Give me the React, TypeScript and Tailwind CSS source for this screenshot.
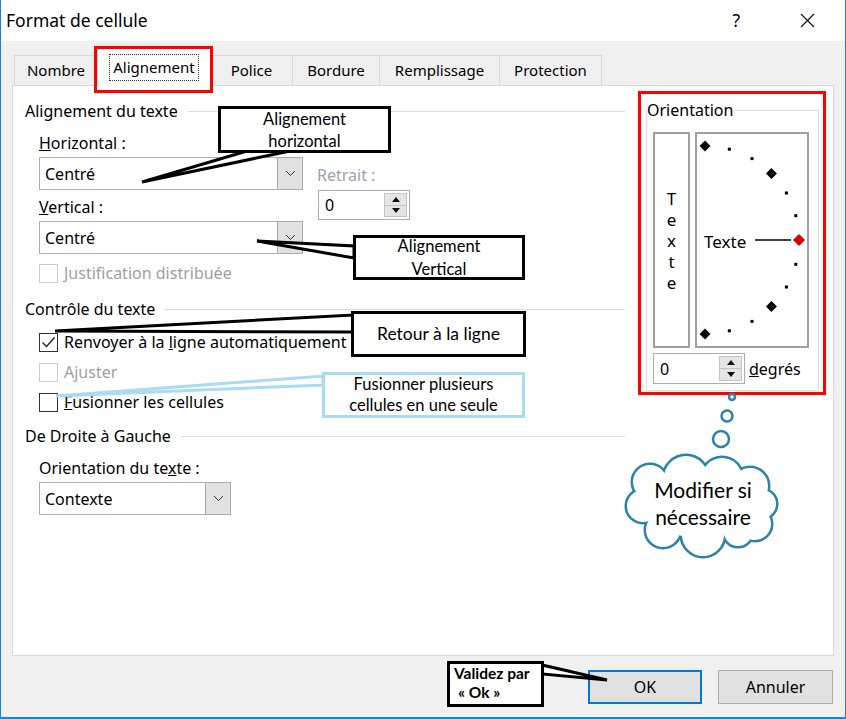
import React from "react";

const ui = "font-['Noto_Sans',sans-serif]";
const note = "font-['Lato',sans-serif]";

function Chevron() {
  return (
    <svg width="11" height="7" viewBox="0 0 11 7">
      <path d="M1 1l4.5 4.5L10 1" fill="none" stroke="#333" strokeWidth="1" />
    </svg>
  );
}

function Select({ value, width }: { value: string; width: string }) {
  return (
    <div className={`${width} h-[33px] flex border border-[#adadad] bg-white`}>
      <div className="flex-1 flex items-center pl-[5px]">{value}</div>
      <div className="w-[25px] flex items-center justify-center bg-[#e1e1e1] border-l border-[#adadad]">
        <Chevron />
      </div>
    </div>
  );
}

function Spin({ value, width, height }: { value: string; width: string; height: string }) {
  return (
    <div className={`${width} ${height} flex border border-[#adadad] bg-white`}>
      <div className="flex-1 flex items-center pl-[6px]">{value}</div>
      <div className="w-[25px] flex flex-col py-[2px] pr-[2px]">
        <div className="flex-1 bg-[#e5e5e5] border border-[#c4c4c4] flex items-center justify-center">
          <svg width="8" height="5" viewBox="0 0 8 5">
            <path d="M0 5L4 0L8 5Z" fill="#111" />
          </svg>
        </div>
        <div className="flex-1 bg-[#e5e5e5] border border-t-0 border-[#c4c4c4] flex items-center justify-center">
          <svg width="8" height="5" viewBox="0 0 8 5">
            <path d="M0 0L8 0L4 5Z" fill="#111" />
          </svg>
        </div>
      </div>
    </div>
  );
}

function Check({
  label,
  checked = false,
  disabled = false,
}: {
  label: React.ReactNode;
  checked?: boolean;
  disabled?: boolean;
}) {
  return (
    <div className={`h-[30px] flex items-center gap-[6px] ${disabled ? "text-[#a0a0a0]" : ""}`}>
      <div
        className={`w-[19px] h-[19px] border bg-white flex items-center justify-center ${
          disabled ? "border-[#cccccc]" : "border-[#333333]"
        }`}
      >
        {checked && (
          <svg width="17" height="17" viewBox="0 0 17 17">
            <path d="M2.5 8.5L6.5 12.5L14.5 3.5" fill="none" stroke="#222" strokeWidth="1.4" />
          </svg>
        )}
      </div>
      <span>{label}</span>
    </div>
  );
}

function GroupTitle({ children }: { children: React.ReactNode }) {
  return (
    <div className="h-[22px] flex items-center gap-[10px]">
      <span>{children}</span>
      <div className="flex-1 h-px bg-[#dcdcdc]" />
    </div>
  );
}

function Tab({ label, width }: { label: string; width: string }) {
  return (
    <div
      className={`${width} h-[30px] flex items-center justify-center border border-b-0 border-[#d9d9d9] bg-[#f0f0f0] -ml-px first:ml-0`}
    >
      {label}
    </div>
  );
}

function Semicircle() {
  const marks = Array.from({ length: 13 }, (_, i) => {
    const a = ((90 - i * 15) * Math.PI) / 180;
    return { x: 8 + 94 * Math.cos(a), y: 106 - 94 * Math.sin(a), big: i % 3 === 0, red: i === 6 };
  });
  return (
    <svg width="110" height="212" viewBox="0 0 110 212">
      {marks.map((m, i) =>
        m.big ? (
          <path
            key={i}
            d={`M${m.x} ${m.y - 5.5}L${m.x + 5.5} ${m.y}L${m.x} ${m.y + 5.5}L${m.x - 5.5} ${m.y}Z`}
            fill={m.red ? "#e00000" : "#000"}
            stroke={m.red ? "#700" : "none"}
            strokeWidth="0.8"
          />
        ) : (
          <rect key={i} x={m.x - 1.5} y={m.y - 1.5} width="3" height="3" fill="#000" />
        )
      )}
      <line x1="58" y1="106" x2="94" y2="106" stroke="#000" strokeWidth="1.5" />
      <text x="7" y="114" fontSize="17" fontFamily="Noto Sans, sans-serif" fill="#000">
        Texte
      </text>
    </svg>
  );
}

export default function App() {
  return (
    <div
      className={`${ui} relative w-[846px] h-[719px] overflow-hidden bg-[#f0f0f0] border-l border-r border-b-2 border-[#1883d7] text-[16px] text-black flex flex-col`}
    >
      {/* Title bar */}
      <div className="h-[41px] shrink-0 bg-white flex items-center pl-[5px] pr-[30px] text-[17.5px]">
        <span>Format de cellule</span>
        <span className="ml-auto mr-[60px]">?</span>
        <svg width="15" height="15" viewBox="0 0 15 15">
          <path d="M1 1L14 14M14 1L1 14" stroke="#111" strokeWidth="1.2" />
        </svg>
      </div>

      {/* Tabs */}
      <div className="h-[44px] shrink-0 pl-[13px] flex items-end text-[15px]">
        <Tab label="Nombre" width="w-[84px]" />
        <div className="w-[114px] h-[38px] -ml-px -mb-px relative z-10 bg-white border border-b-0 border-[#d9d9d9] flex items-center justify-center">
          <span className="px-[3px] py-px border border-dotted border-[#333]">Alignement</span>
        </div>
        <Tab label="Police" width="w-[83px]" />
        <Tab label="Bordure" width="w-[88px]" />
        <Tab label="Remplissage" width="w-[121px]" />
        <Tab label="Protection" width="w-[103px]" />
      </div>

      {/* Panel */}
      <div className="mx-[11px] h-[571px] shrink-0 bg-white border border-[#d9d9d9] flex">
        {/* Left column */}
        <div className="w-[600px] ml-[12px] flex flex-col">
          <div className="mt-[14px]">
            <GroupTitle>Alignement du texte</GroupTitle>
          </div>
          <div className="flex pl-[14px] gap-[14px] mt-[10px]">
            <div className="w-[264px] flex flex-col">
              <div className="h-[22px] flex items-center">
                <span>
                  <span className="underline">H</span>orizontal :
                </span>
              </div>
              <div className="mt-[3px]">
                <Select value="Centré" width="w-[264px]" />
              </div>
              <div className="h-[22px] mt-[6px] flex items-center">
                <span>
                  <span className="underline">V</span>ertical :
                </span>
              </div>
              <div className="mt-[3px]">
                <Select value="Centré" width="w-[264px]" />
              </div>
              <div className="mt-[4px]">
                <Check disabled label="Justification distribuée" />
              </div>
            </div>
            <div className="flex flex-col pt-[32px]">
              <div className="h-[22px] flex items-center text-[#9aa3ad]">Retrait :</div>
              <div className="mt-[4px] ml-px">
                <Spin value="0" width="w-[92px]" height="h-[30px]" />
              </div>
            </div>
          </div>

          <div className="mt-[10px]">
            <GroupTitle>Contrôle du texte</GroupTitle>
          </div>
          <div className="pl-[14px] mt-[7px] flex flex-col">
            <Check
              checked
              label={
                <>
                  Renvoyer à la <span className="underline">l</span>igne automatiquement
                </>
              }
            />
            <Check disabled label="Ajuster" />
            <Check
              label={
                <>
                  <span className="underline">F</span>usionner les cellules
                </>
              }
            />
          </div>

          <div className="mt-[8px]">
            <GroupTitle>De Droite à Gauche</GroupTitle>
          </div>
          <div className="pl-[14px] mt-[10px] flex flex-col">
            <div className="h-[22px] flex items-center">
              <span>
                Orientation du te<span className="underline">x</span>te :
              </span>
            </div>
            <div className="mt-[3px]">
              <Select value="Contexte" width="w-[192px]" />
            </div>
          </div>
        </div>

        {/* Orientation */}
        <div className="ml-[13px] mt-[5px] w-[188px] h-[304px] border-[3px] border-[#ff0000]">
          <fieldset className="ml-[5px] mt-[5px] w-[173px] h-[292px] border border-[#dcdcdc]">
            <legend className="h-[22px] leading-[22px] pr-[2px]">Orientation</legend>
            <div className="flex gap-[5px] pl-[6px] mt-[11px]">
              <div className="w-[37px] h-[216px] border-2 border-[#a0a0a0] flex flex-col items-center justify-center gap-[4px] leading-[17px] text-[17px]">
                <span>T</span>
                <span>e</span>
                <span>x</span>
                <span>t</span>
                <span>e</span>
              </div>
              <div className="w-[114px] h-[216px] border-2 border-[#a0a0a0]">
                <Semicircle />
              </div>
            </div>
            <div className="flex items-center gap-[4px] pl-[6px] mt-[5px]">
              <Spin value="0" width="w-[92px]" height="h-[31px]" />
              <span>
                <span className="underline">d</span>egrés
              </span>
            </div>
          </fieldset>
        </div>
      </div>

      {/* Buttons */}
      <div className="flex-1 flex items-center justify-end gap-[16px] pr-[12px]">
        <button className="w-[114px] h-[34px] bg-[#e1e1e1] border-2 border-[#0078d7]">OK</button>
        <button className="w-[115px] h-[34px] bg-[#e1e1e1] border border-[#adadad]">Annuler</button>
      </div>

      {/* Annotations */}
      <div className="absolute -left-px top-0 w-[846px] h-[719px] z-20 pointer-events-none">
        <svg width="846" height="719" viewBox="0 0 846 719" className="absolute left-0 top-0">
          {/* highlight on tab */}
          <rect x="95.5" y="47.5" width="116" height="44" fill="none" stroke="#ff0000" strokeWidth="3" />

          {/* Alignement horizontal */}
          <polygon points="247,151 290,151 142,182" fill="#fff" stroke="#000" strokeWidth="3" />
          <rect x="219.5" y="107.5" width="170" height="44" fill="#fff" stroke="#000" strokeWidth="3" />

          {/* Alignement vertical */}
          <polygon points="354,246 354,258 257,241" fill="#fff" stroke="#000" strokeWidth="3" />
          <rect x="354.5" y="236.5" width="169" height="42" fill="#fff" stroke="#000" strokeWidth="3" />

          {/* Retour a la ligne */}
          <polygon points="353,315 353,332 55,331" fill="#fff" stroke="#000" strokeWidth="3" />
          <rect x="352.5" y="312.5" width="172" height="43" fill="#fff" stroke="#000" strokeWidth="3" />

          {/* Fusionner */}
          <polygon points="323,376 323,385 56,396" fill="#fff" stroke="#a8dcf0" strokeWidth="3" />
          <rect x="323.5" y="373.5" width="200" height="43" fill="#fff" stroke="#a8dcf0" strokeWidth="3" />

          {/* Validez */}
          <polygon points="542,665 542,674 607,680" fill="#fff" stroke="#000" strokeWidth="3" />
          <rect x="448.5" y="662.5" width="94" height="43" fill="#fff" stroke="#000" strokeWidth="3" />

          {/* thought cloud */}
          <g stroke="#2b83a8" strokeWidth="2.5" fill="#fff">
            <circle cx="732" cy="397" r="3" />
            <circle cx="727" cy="416" r="5.5" />
            <circle cx="721" cy="439" r="8" />
          </g>
          <g stroke="#2b83a8" strokeWidth="5" fill="#fff">
            <circle cx="650" cy="482" r="17" />
            <circle cx="686" cy="478" r="22" />
            <circle cx="722" cy="478" r="20" />
            <circle cx="750" cy="486" r="18" />
            <circle cx="762" cy="504" r="14" />
            <circle cx="755" cy="524" r="16" />
            <circle cx="738" cy="532" r="14" />
            <circle cx="703" cy="535" r="21" />
            <circle cx="663" cy="530" r="17" />
            <circle cx="643" cy="506" r="16" />
          </g>
          <g fill="#fff">
            <circle cx="650" cy="482" r="17" />
            <circle cx="686" cy="478" r="22" />
            <circle cx="722" cy="478" r="20" />
            <circle cx="750" cy="486" r="18" />
            <circle cx="762" cy="504" r="14" />
            <circle cx="755" cy="524" r="16" />
            <circle cx="738" cy="532" r="14" />
            <circle cx="703" cy="535" r="21" />
            <circle cx="663" cy="530" r="17" />
            <circle cx="643" cy="506" r="16" />
            <ellipse cx="702" cy="506" rx="58" ry="32" />
          </g>
        </svg>

        <div className={`${note} absolute left-[221px] top-[109px] w-[167px] h-[41px] flex flex-col items-center justify-center text-[16.5px] leading-[22px]`}>
          <span>Alignement</span>
          <span>horizontal</span>
        </div>
        <div className={`${note} absolute left-[356px] top-[238px] w-[166px] h-[39px] flex flex-col items-center justify-center text-[16.5px] leading-[23px]`}>
          <span>Alignement</span>
          <span>Vertical</span>
        </div>
        <div className={`${note} absolute left-[354px] top-[314px] w-[169px] h-[40px] flex items-center justify-center text-[17.5px]`}>
          Retour à la ligne
        </div>
        <div className={`${note} absolute left-[325px] top-[375px] w-[197px] h-[40px] flex flex-col items-center justify-center text-[16.5px] leading-[21px]`}>
          <span>Fusionner plusieurs</span>
          <span>cellules en une seule</span>
        </div>
        <div className={`${note} absolute left-[454px] top-[664px] w-[88px] flex flex-col font-bold text-[15.5px] leading-[19px]`}>
          <span>Validez par</span>
          <span className="pl-[4px]">« Ok »</span>
        </div>
        <div className={`${note} absolute left-[633px] top-[476px] w-[140px] flex flex-col items-center text-[21px] leading-[27px]`}>
          <span>Modifier si</span>
          <span>nécessaire</span>
        </div>
      </div>
    </div>
  );
}
